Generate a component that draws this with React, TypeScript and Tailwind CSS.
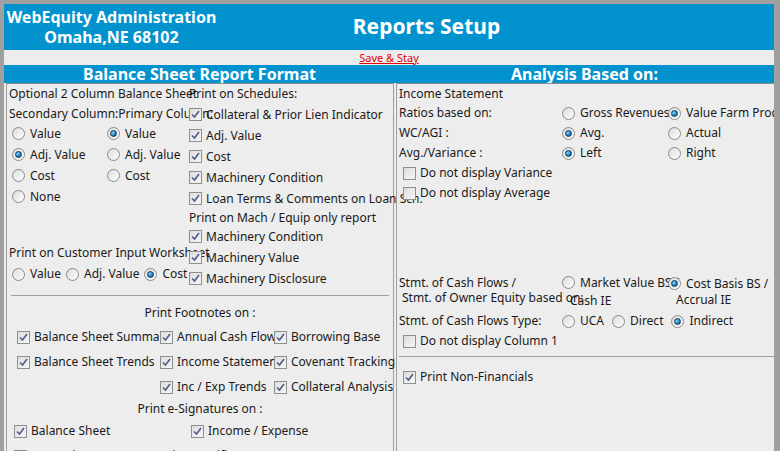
import React from "react";

function Radio({ on }: { on?: boolean }) {
  return (
    <span className="inline-flex size-[13px] shrink-0 items-center justify-center rounded-full border border-[#8a8a8a] bg-gradient-to-br from-[#dcdcdc] to-white">
      {on && <span className="size-[7px] rounded-full border border-[#0b3e5c] bg-[radial-gradient(circle_at_35%_35%,#8fd3ff,#1a78b8_60%,#0b4a70)]" />}
    </span>
  );
}

function Check({ on }: { on?: boolean }) {
  return (
    <span className="inline-flex size-[13px] shrink-0 items-center justify-center border border-[#8f8f8f] bg-gradient-to-br from-[#dedede] to-[#f6f6f6]">
      {on && (
        <svg width="9" height="9" viewBox="0 0 9 9">
          <path d="M1 4.5 L3.5 7 L8 1" fill="none" stroke="#4b5d8a" strokeWidth="1.6" />
        </svg>
      )}
    </span>
  );
}

function R({ on, children, className = "" }: { on?: boolean; children: React.ReactNode; className?: string }) {
  return (
    <span className={`inline-flex items-center gap-[5px] whitespace-nowrap ${className}`}>
      <Radio on={on} />
      {children}
    </span>
  );
}

function C({ on, children, className = "" }: { on?: boolean; children: React.ReactNode; className?: string }) {
  return (
    <span className={`inline-flex items-center gap-[4px] whitespace-nowrap ${className}`}>
      <Check on={on} />
      {children}
    </span>
  );
}

export default function App() {
  return (
    <div className="h-[451px] w-[780px] overflow-hidden whitespace-nowrap border-l-4 border-t-4 border-r-[6px] border-[#a0a0a0] bg-[#ededed] font-['Liberation_Sans',Arial,sans-serif] text-[12px] text-[#1a1a1a]">
      <div className="flex h-[46px] items-center bg-[#0292cd] text-white">
        <div className="w-[215px] text-center text-[16px] font-bold leading-[20px]">
          WebEquity Administration
          <br />
          Omaha,NE 68102
        </div>
        <div className="flex-1 pr-[140px] text-center text-[21px] font-bold">Reports Setup</div>
      </div>
      <div className="flex h-[14px] items-end justify-center text-[11px] leading-[12px] text-[#e00000] underline">
        <span>Save &amp; Stay</span>
      </div>
      <div className="mt-px flex h-[18px] bg-[#0292cd] text-[16px] font-bold leading-[18px] text-white">
        <div className="w-[391px] text-center">Balance Sheet Report Format</div>
        <div className="flex-1 text-center">Analysis Based on:</div>
      </div>
      <div className="flex gap-[2px] px-[2px]">
        {/* left */}
        <div className="h-[380px] w-[388px] border border-[#a0a0a0] border-t-[#8c8c8c]">
          <div className="flex">
            <div className="w-[180px] pl-[2px]">
              <div className="flex h-[20px] items-center">Optional 2 Column Balance Sheet</div>
              <div className="flex h-[19px] items-center">Secondary Column:Primary Column:</div>
              <div className="pl-[3px]">
                {[
                  ["Value", false, "Value", true],
                  ["Adj. Value", true, "Adj. Value", false],
                  ["Cost", false, "Cost", false],
                  ["None", false, "", false],
                ].map(([a, ao, b, bo], i) => (
                  <div key={i} className="flex h-[21px] items-center">
                    <R on={ao as boolean} className="w-[95px]">{a as string}</R>
                    {b && <R on={bo as boolean}>{b as string}</R>}
                  </div>
                ))}
              </div>
              <div className="mt-[36px] flex h-[20px] items-center">Print on Customer Input Worksheet</div>
              <div className="flex h-[22px] items-center gap-[5px] pl-[3px]">
                <R>Value</R>
                <R>Adj. Value</R>
                <R on>Cost</R>
              </div>
            </div>
            <div className="flex-1 pl-[2px]">
              <div className="flex h-[20px] items-center">Print on Schedules:</div>
              {["Collateral & Prior Lien Indicator", "Adj. Value", "Cost", "Machinery Condition", "Loan Terms & Comments on Loan Sch."].map((t) => (
                <div key={t} className="flex h-[21px] items-center">
                  <C on>{t}</C>
                </div>
              ))}
              <div className="flex h-[17px] items-center">Print on Mach / Equip only report</div>
              {["Machinery Condition", "Machinery Value", "Machinery Disclosure"].map((t) => (
                <div key={t} className="flex h-[21px] items-center">
                  <C on>{t}</C>
                </div>
              ))}
            </div>
          </div>
          <div className="mx-[4px] mt-[6px] border-t border-[#a0a0a0]" />
          <div className="mt-[8px] text-center">Print Footnotes on :</div>
          <div className="mt-[6px] grid grid-cols-[143px_114px_1fr] gap-y-[7px] pl-[10px]">
            <C on>Balance Sheet Summary</C>
            <C on>Annual Cash Flow</C>
            <C on>Borrowing Base</C>
            <C on>Balance Sheet Trends</C>
            <C on>Income Statement</C>
            <C on>Covenant Tracking</C>
            <span />
            <C on>Inc / Exp Trends</C>
            <C on>Collateral Analysis</C>
          </div>
          <div className="mt-[4px] text-center">Print e-Signatures on :</div>
          <div className="mt-[4px] grid grid-cols-[177px_1fr] gap-y-[7px] pl-[7px]">
            <C on>Balance Sheet</C>
            <C on>Income / Expense</C>
            <C on className="col-span-2">Borrowing Base / Inspection Certificate</C>
          </div>
        </div>
        {/* right */}
        <div className="h-[380px] flex-1 border border-[#a0a0a0] border-t-[#8c8c8c] pl-[2px]">
          <div className="flex h-[19px] items-center">Income Statement</div>
          {[
            ["Ratios based on:", "Gross Revenues", false, "Value Farm Prod.", true],
            ["WC/AGI :", "Avg.", true, "Actual", false],
            ["Avg./Variance :", "Left", true, "Right", false],
          ].map(([l, a, ao, b, bo]) => (
            <div key={l as string} className="flex h-[20px] items-center">
              <span className="w-[163px]">{l as string}</span>
              <R on={ao as boolean} className="w-[106px]">{a as string}</R>
              <R on={bo as boolean}>{b as string}</R>
            </div>
          ))}
          <div className="pl-[4px]">
            <div className="flex h-[20px] items-center"><C>Do not display Variance</C></div>
            <div className="flex h-[20px] items-center"><C>Do not display Average</C></div>
          </div>
          <div className="mt-[72px] flex">
            <div className="w-[163px] leading-[15px]">
              Stmt. of Cash Flows /
              <br />
              <span className="pl-[3px]">Stmt. of Owner Equity based on:</span>
            </div>
            <div className="w-[106px] leading-[15px]">
              <R>Market Value BS /</R>
              <div className="pl-[8px] pt-[1px]">Cash IE</div>
            </div>
            <div className="leading-[15px]">
              <R on>Cost Basis BS /</R>
              <div className="pl-[8px] pt-[1px]">Accrual IE</div>
            </div>
          </div>
          <div className="mt-[3px] flex h-[20px] items-center">
            <span className="w-[163px]">Stmt. of Cash Flows Type:</span>
            <span className="flex gap-[8px]">
              <R>UCA</R>
              <R>Direct</R>
              <R on>Indirect</R>
            </span>
          </div>
          <div className="flex h-[20px] items-center pl-[4px]"><C>Do not display Column 1</C></div>
          <div className="mr-[2px] mt-[5px] border-t border-[#a0a0a0]" />
          <div className="mt-[10px] flex h-[20px] items-center pl-[4px]"><C on>Print Non-Financials</C></div>
        </div>
      </div>
    </div>
  );
}
